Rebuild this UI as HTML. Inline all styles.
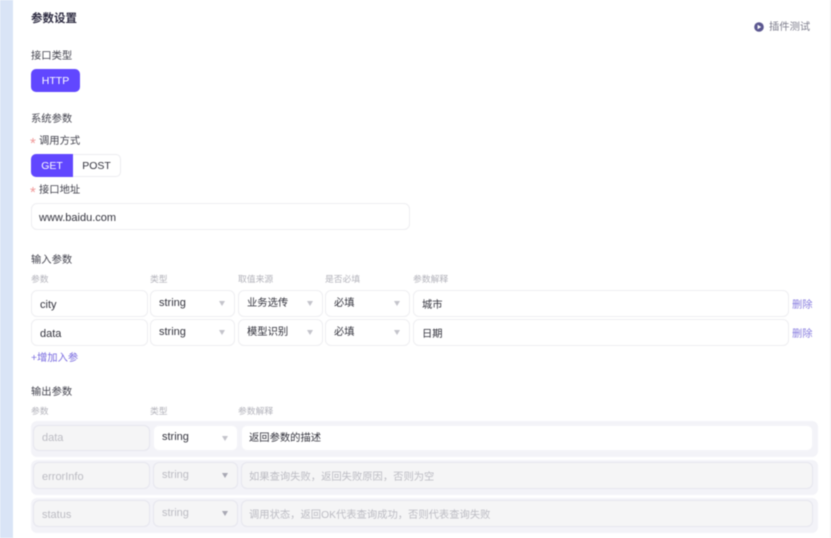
<!DOCTYPE html>
<html><head><meta charset="utf-8">
<style>
html,body{margin:0;padding:0;background:#fff}
body{width:831px;height:538px;position:relative;overflow:hidden;font-family:"Liberation Sans","Noto Sans CJK SC",sans-serif;color:#2c2c3a;filter:blur(.4px)}
.a{position:absolute;white-space:nowrap}
.t{font-size:10.3px;line-height:14px;color:#44444f}
.h{font-size:8.8px;line-height:12px;color:#b2b2ba}
.b{position:absolute;box-sizing:border-box;background:#fff;border:1px solid #eeeef1;border-radius:6px;font-size:11px;color:#33333d;white-space:nowrap}
.b span{position:absolute;left:9px;top:5px;line-height:15px}
.b span.c{font-size:10.3px}
.b i{position:absolute;right:9px;top:10px;width:0;height:0;border-left:3.5px solid transparent;border-right:3.5px solid transparent;border-top:5px solid #c4c4cb}
.w{position:absolute;left:31px;width:787px;background:#f3f3f8;border-radius:6px}
.g{background:#f5f5f6;border-color:#e6e6ee;color:#bcbcc3}
.g i{border-top-color:#a8a8b3}
.w1{background:#fff;border-color:#f5f5f9}
.r{color:#f09a9a;font-size:15px}
</style></head><body>
<div class="a" style="left:0;top:0;width:13px;height:538px;background:#d9e4f6"></div>
<div class="a" style="left:830px;top:0;width:1px;height:538px;background:#eeeef2"></div>

<div class="a" style="left:31px;top:11px;font-size:11.5px;line-height:16px;font-weight:700;color:#2e2c42">参数设置</div>
<svg class="a" style="left:754px;top:22px" width="11" height="11" viewBox="0 0 11 11"><circle cx="5" cy="5" r="4.8" fill="#5b5790"/><path d="M3.6 2.8v4.4l3.6-2.2z" fill="#fff"/></svg>
<div class="a" style="left:769px;top:21px;font-size:10.3px;line-height:14px;color:#7d7d8c">插件测试</div>

<div class="a t" style="left:31px;top:50px">接口类型</div>
<div class="a" style="left:31px;top:69px;width:49px;height:23px;background:#6147ff;border-radius:5px;color:#fff;font-size:10.5px;line-height:25px;text-align:center">HTTP</div>

<div class="a t" style="left:31px;top:113px">系统参数</div>
<div class="a r" style="left:30px;top:137px;line-height:14px">*</div>
<div class="a t" style="left:39px;top:135px">调用方式</div>
<div class="a" style="left:31px;top:154px;width:90px;height:23px;box-sizing:border-box;border:1px solid #ececf0;border-radius:5px"></div>
<div class="a" style="left:31px;top:154px;width:42px;height:23px;background:#6147ff;border-radius:5px 0 0 5px;color:#fff;font-size:10.5px;line-height:25px;text-align:center">GET</div>
<div class="a" style="left:73px;top:154px;width:47px;height:23px;color:#33333d;font-size:10.5px;line-height:25px;text-align:center">POST</div>
<div class="a r" style="left:30px;top:186px;line-height:14px">*</div>
<div class="a t" style="left:39px;top:184px">接口地址</div>
<div class="b" style="left:31px;top:203px;width:379px;height:27px"><span style="left:7px;top:7px">www.baidu.com</span></div>

<div class="a t" style="left:31px;top:254px">输入参数</div>
<div class="a h" style="left:31px;top:273px">参数</div>
<div class="a h" style="left:150px;top:273px">类型</div>
<div class="a h" style="left:238px;top:273px">取值来源</div>
<div class="a h" style="left:325px;top:273px">是否必填</div>
<div class="a h" style="left:413px;top:273px">参数解释</div>

<div class="b" style="left:31px;top:290px;width:117px;height:27px"><span style="left:8px;top:7px">city</span></div>
<div class="b" style="left:150px;top:290px;width:85px;height:27px"><span style="left:8px;top:5px">string</span><i></i></div>
<div class="b" style="left:238px;top:290px;width:85px;height:27px"><span class="c" style="left:8px;top:5px">业务选传</span><i></i></div>
<div class="b" style="left:325px;top:290px;width:85px;height:27px"><span class="c" style="left:8px;top:5px">必填</span><i></i></div>
<div class="b" style="left:413px;top:290px;width:376px;height:27px"><span class="c" style="left:8px;top:7px">城市</span></div>
<div class="a" style="left:792px;top:299px;font-size:10.3px;line-height:14px;color:#8a7fe0">删除</div>

<div class="b" style="left:31px;top:319px;width:117px;height:27px"><span style="left:8px;top:7px">data</span></div>
<div class="b" style="left:150px;top:319px;width:85px;height:27px"><span style="left:8px;top:5px">string</span><i></i></div>
<div class="b" style="left:238px;top:319px;width:85px;height:27px"><span class="c" style="left:8px;top:5px">模型识别</span><i></i></div>
<div class="b" style="left:325px;top:319px;width:85px;height:27px"><span class="c" style="left:8px;top:5px">必填</span><i></i></div>
<div class="b" style="left:413px;top:319px;width:376px;height:27px"><span class="c" style="left:8px;top:7px">日期</span></div>
<div class="a" style="left:792px;top:328px;font-size:10.3px;line-height:14px;color:#8a7fe0">删除</div>
<div class="a" style="left:31px;top:352px;font-size:10.3px;line-height:14px;color:#7a6ce0">+增加入参</div>

<div class="a t" style="left:31px;top:386px">输出参数</div>
<div class="a h" style="left:31px;top:405px">参数</div>
<div class="a h" style="left:150px;top:405px">类型</div>
<div class="a h" style="left:238px;top:405px">参数解释</div>

<div class="w" style="top:421px;height:36px"></div>
<div class="b g" style="left:33px;top:425px;width:117px;height:26px"><span style="left:8px;top:5px">data</span></div>
<div class="b w1" style="left:153px;top:425px;width:85px;height:26px"><span style="left:8px;top:4px">string</span><i></i></div>
<div class="b w1" style="left:241px;top:425px;width:572px;height:26px"><span class="c" style="left:7px;top:5px">返回参数的描述</span></div>

<div class="w" style="top:460px;height:35px"></div>
<div class="b g" style="left:33px;top:462px;width:117px;height:27px"><span style="left:8px;top:7px">errorInfo</span></div>
<div class="b g" style="left:153px;top:462px;width:85px;height:27px"><span style="left:8px;top:5px">string</span><i></i></div>
<div class="b g" style="left:241px;top:462px;width:572px;height:27px"><span class="c" style="left:7px;top:7px">如果查询失败，返回失败原因，否则为空</span></div>

<div class="w" style="top:498px;height:35px"></div>
<div class="b g" style="left:33px;top:500px;width:117px;height:27px"><span style="left:8px;top:7px">status</span></div>
<div class="b g" style="left:153px;top:500px;width:85px;height:27px"><span style="left:8px;top:5px">string</span><i></i></div>
<div class="b g" style="left:241px;top:500px;width:572px;height:27px"><span class="c" style="left:7px;top:7px">调用状态，返回OK代表查询成功，否则代表查询失败</span></div>
</body></html>
